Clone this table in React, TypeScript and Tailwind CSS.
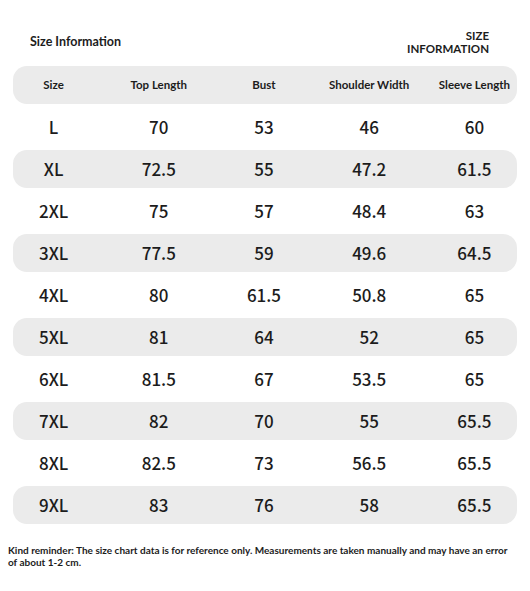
const rows = [
  ["L", "70", "53", "46", "60"],
  ["XL", "72.5", "55", "47.2", "61.5"],
  ["2XL", "75", "57", "48.4", "63"],
  ["3XL", "77.5", "59", "49.6", "64.5"],
  ["4XL", "80", "61.5", "50.8", "65"],
  ["5XL", "81", "64", "52", "65"],
  ["6XL", "81.5", "67", "53.5", "65"],
  ["7XL", "82", "70", "55", "65.5"],
  ["8XL", "82.5", "73", "56.5", "65.5"],
  ["9XL", "83", "76", "58", "65.5"],
];

const headers = ["Size", "Top Length", "Bust", "Shoulder Width", "Sleeve Length"];

export default function App() {
  return (
    <div className="w-[530px] h-[591px] bg-white text-[#1c1c1c] font-['Lato',sans-serif] overflow-hidden">
      {/* Title */}
      <div className="flex items-center justify-between pl-[30px] pr-[41px] pt-[29px] mb-[11px]">
        <div className="text-[12.5px] font-bold">Size Information</div>
        <div className="text-right text-[11.5px] font-bold leading-[13px]">
          <div>SIZE</div>
          <div>INFORMATION</div>
        </div>
      </div>

      {/* Table */}
      <div className="flex flex-col gap-[4px]">
        <div className="mx-[13px] h-[38px] rounded-[14px] bg-[#ebebeb] flex items-center">
          <div className="-ml-[12px] -mr-[10px] flex-1 grid grid-cols-5">
            {headers.map((h) => (
              <div key={h} className="text-center text-[11.5px] font-bold">
                {h}
              </div>
            ))}
          </div>
        </div>
        {rows.map((r, i) => (
          <div
            key={r[0]}
            className={
              "mx-[13px] h-[38px] rounded-[14px] flex items-center " +
              (i % 2 === 1 ? "bg-[#ebebeb]" : "bg-white")
            }
          >
            <div className="-ml-[12px] -mr-[10px] flex-1 grid grid-cols-5">
              {r.map((v, j) => (
                <div
                  key={j}
                  className="text-center text-[17px] font-medium font-['Noto_Sans_CJK_SC','Noto_Sans',sans-serif]"
                >
                  {v}
                </div>
              ))}
            </div>
          </div>
        ))}
      </div>

      {/* Footer */}
      <div className="mt-[20px] pl-[8px] pr-[12px] text-[10px] font-bold leading-[12px]">
        Kind reminder: The size chart data is for reference only. Measurements are taken manually and may have an error of about 1-2 cm.
      </div>
    </div>
  );
}
